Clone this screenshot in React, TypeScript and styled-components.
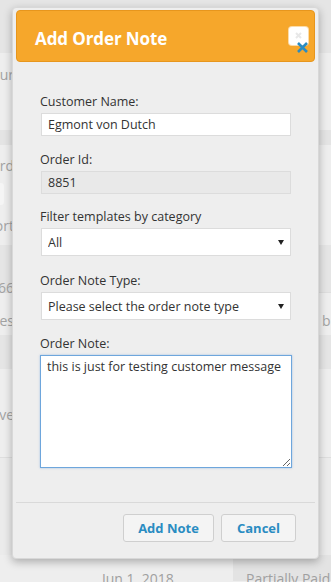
import React from "react";
import styled, { createGlobalStyle } from "styled-components";

const Global = createGlobalStyle`
  html, body { margin: 0; padding: 0; }
  body {
    width: 331px;
    height: 582px;
    overflow: hidden;
    background: #eeeeee;
    font-family: "Open Sans", "Liberation Sans", sans-serif;
  }
  * { box-sizing: border-box; }
`;

const Page = styled.div`
  position: relative;
  width: 331px;
  height: 582px;
  overflow: hidden;
`;

const Backdrop = styled.div`
  display: flex;
  flex-direction: column;
  width: 100%;
  height: 100%;
`;

const Band = styled.div<{ $h: number; $bg: string; $line?: boolean }>`
  height: ${(p) => p.$h}px;
  flex: none;
  background: ${(p) => p.$bg};
  border-bottom: ${(p) => (p.$line ? "1px solid #dedede" : "none")};
  display: flex;
  flex-direction: column;
`;

const BandRow = styled.div<{ $top: number }>`
  display: flex;
  justify-content: space-between;
  align-items: center;
  height: 20px;
  margin-top: ${(p) => p.$top}px;
`;

const Ghost = styled.span`
  display: flex;
  justify-content: flex-end;
  width: 14px;
  white-space: nowrap;
  font-size: 14px;
  color: #a3a3a3;
`;

const GhostRight = styled.span`
  display: flex;
  justify-content: flex-start;
  width: 9px;
  white-space: nowrap;
  font-size: 14px;
  color: #a3a3a3;
  overflow: hidden;
`;

const GhostBox = styled.div<{ $top: number }>`
  width: 4px;
  height: 22px;
  margin-top: ${(p) => p.$top}px;
  background: #f5f5f5;
  border-radius: 0 3px 3px 0;
`;

const BottomRow = styled.div`
  display: flex;
  height: 26px;
  flex: none;
  background: #eeeeee;
  align-items: flex-end;
`;

const DateCell = styled.div`
  width: 233px;
  padding-left: 102px;
  font-size: 14px;
  color: #a0a0a0;
  line-height: 16px;
  margin-bottom: -6px;
`;

const StatusCell = styled.div`
  flex: 1;
  height: 100%;
  background: #e3e3e3;
  padding-left: 13px;
  display: flex;
  align-items: flex-end;
  font-size: 14px;
  color: #a0a0a0;
  line-height: 16px;
  white-space: nowrap;
  & > span { margin-bottom: -6px; }
`;

const Modal = styled.div`
  position: absolute;
  top: 7px;
  left: 12px;
  width: 307px;
  height: 552px;
  background: #eeeeee;
  border: 1px solid #d8d8d8;
  border-radius: 4px;
  box-shadow: 0 3px 8px rgba(0, 0, 0, 0.28);
  padding: 2px 3px 0 3px;
  display: flex;
  flex-direction: column;
  font-family: "Open Sans", "Liberation Sans", sans-serif;
`;

const Header = styled.div`
  position: relative;
  height: 52px;
  background: #f6a72b;
  border: 1px solid #e7961d;
  border-radius: 4px;
  display: flex;
  align-items: center;
  padding: 4px 0 0 18px;
`;

const Title = styled.h2`
  margin: 0;
  font-size: 17px;
  font-weight: 700;
  color: #ffffff;
  letter-spacing: -0.1px;
`;

const Close = styled.button`
  position: absolute;
  top: 16px;
  right: 6px;
  width: 19px;
  height: 18px;
  border: none;
  padding: 0;
  background: #ffffff;
  border-radius: 3px;
  box-shadow: 0 0 0 1px rgba(255, 255, 255, 0.6);
  cursor: pointer;
`;

const CloseX = styled.svg`
  position: absolute;
  right: -1px;
  bottom: -9px;
`;

const Body = styled.div`
  padding: 32px 23px 0 24px;
  display: flex;
  flex-direction: column;
  height: 440px;
`;

const Field = styled.div<{ $mb: number }>`
  display: flex;
  flex-direction: column;
  gap: 3px;
  margin-bottom: ${(p) => p.$mb}px;
`;

const Label = styled.label`
  font-size: 12.5px;
  line-height: 16px;
  color: #333333;
`;

const Input = styled.input<{ $disabled?: boolean }>`
  width: 250px;
  height: 23px;
  margin-left: 1px;
  border: 1px solid #dcdcdc;
  background: ${(p) => (p.$disabled ? "#e9e9e9" : "#ffffff")};
  padding: 0 6px;
  font-family: inherit;
  font-size: 12.5px;
  color: #333333;
  outline: none;
`;

const SelectWrap = styled.div`
  position: relative;
  width: 250px;
  margin-left: 1px;
`;

const Select = styled.select`
  appearance: none;
  -webkit-appearance: none;
  width: 100%;
  height: 28px;
  border: 1px solid #dcdcdc;
  background: #ffffff;
  padding: 0 6px;
  font-family: inherit;
  font-size: 12.5px;
  color: #333333;
  outline: none;
  border-radius: 0;
`;

const Arrow = styled.svg`
  position: absolute;
  right: 7px;
  top: 12px;
  pointer-events: none;
`;

const TextArea = styled.textarea`
  width: 252px;
  height: 113px;
  border: 1px solid #6ea6dc;
  box-shadow: 0 0 2px rgba(90, 150, 220, 0.5);
  background: #ffffff;
  padding: 3px 6px;
  font-family: inherit;
  font-size: 12.5px;
  line-height: 16px;
  color: #333333;
  outline: none;
  resize: both;
`;

const Footer = styled.div`
  border-top: 1px solid #d9d9d9;
  display: flex;
  justify-content: flex-end;
  gap: 7px;
  padding: 11px 19px 0 0;
`;

const Button = styled.button<{ $w: number }>`
  width: ${(p) => p.$w}px;
  height: 28px;
  background: #f4f4f4;
  border: 1px solid #cfcfcf;
  border-radius: 3px;
  font-family: inherit;
  font-size: 13px;
  font-weight: 700;
  color: #2a8cc2;
  cursor: pointer;
`;

const SelectArrow = () => (
  <Arrow width="6" height="5" viewBox="0 0 6 5">
    <path d="M0 0 H6 L3 5 Z" fill="#222" />
  </Arrow>
);

export default function App() {
  return (
    <Page>
      <Global />
      <Backdrop>
        <Band $h={53} $bg="#e5e5e5" />
        <Band $h={77} $bg="#eeeeee">
          <BandRow $top={11}>
            <Ghost>Hour</Ghost>
          </BandRow>
        </Band>
        <Band $h={15} $bg="#e4e4e4" />
        <Band $h={100} $bg="#eeeeee">
          <BandRow $top={10}>
            <Ghost>Record</Ghost>
          </BandRow>
          <GhostBox $top={8} />
          <BandRow $top={10}>
            <Ghost>Report</Ghost>
          </BandRow>
        </Band>
        <Band $h={48} $bg="#e5e5e5" $line>
          <BandRow $top={33}>
            <Ghost>1266</Ghost>
          </BandRow>
        </Band>
        <Band $h={42} $bg="#eeeeee">
          <BandRow $top={17}>
            <Ghost>Notes</Ghost>
            <GhostRight>bill</GhostRight>
          </BandRow>
        </Band>
        <Band $h={34} $bg="#e5e5e5" />
        <Band $h={89} $bg="#eeeeee" $line>
          <BandRow $top={35}>
            <Ghost>Conve</Ghost>
          </BandRow>
        </Band>
        <Band $h={97} $bg="#ebebeb" />
        <BottomRow>
          <DateCell>Jun 1, 2018</DateCell>
          <StatusCell>
            <span>Partially Paid</span>
          </StatusCell>
        </BottomRow>
      </Backdrop>

      <Modal>
        <Header>
          <Title>Add Order Note</Title>
          <Close aria-label="Close">
            <svg width="19" height="18" viewBox="0 0 19 18">
              <path d="M7 6 L12 11 M12 6 L7 11" stroke="#e8e8e8" strokeWidth="2" />
            </svg>
            <CloseX width="13" height="13" viewBox="0 0 13 13">
              <path d="M2 2 L11 11 M11 2 L2 11" stroke="#2a8cc2" strokeWidth="2.6" strokeLinecap="butt" />
            </CloseX>
          </Close>
        </Header>
        <Body>
          <Field $mb={16}>
            <Label>Customer Name:</Label>
            <Input defaultValue="Egmont von Dutch" />
          </Field>
          <Field $mb={15}>
            <Label>Order Id:</Label>
            <Input $disabled defaultValue="8851" readOnly />
          </Field>
          <Field $mb={17}>
            <Label>Filter templates by category</Label>
            <SelectWrap>
              <Select defaultValue="all">
                <option value="all">All</option>
              </Select>
              <SelectArrow />
            </SelectWrap>
          </Field>
          <Field $mb={16}>
            <Label>Order Note Type:</Label>
            <SelectWrap>
              <Select defaultValue="">
                <option value="">Please select the order note type</option>
              </Select>
              <SelectArrow />
            </SelectWrap>
          </Field>
          <Field $mb={0}>
            <Label>Order Note:</Label>
            <TextArea defaultValue="this is just for testing customer message" />
          </Field>
        </Body>
        <Footer>
          <Button $w={91}>Add Note</Button>
          <Button $w={75}>Cancel</Button>
        </Footer>
      </Modal>
    </Page>
  );
}
